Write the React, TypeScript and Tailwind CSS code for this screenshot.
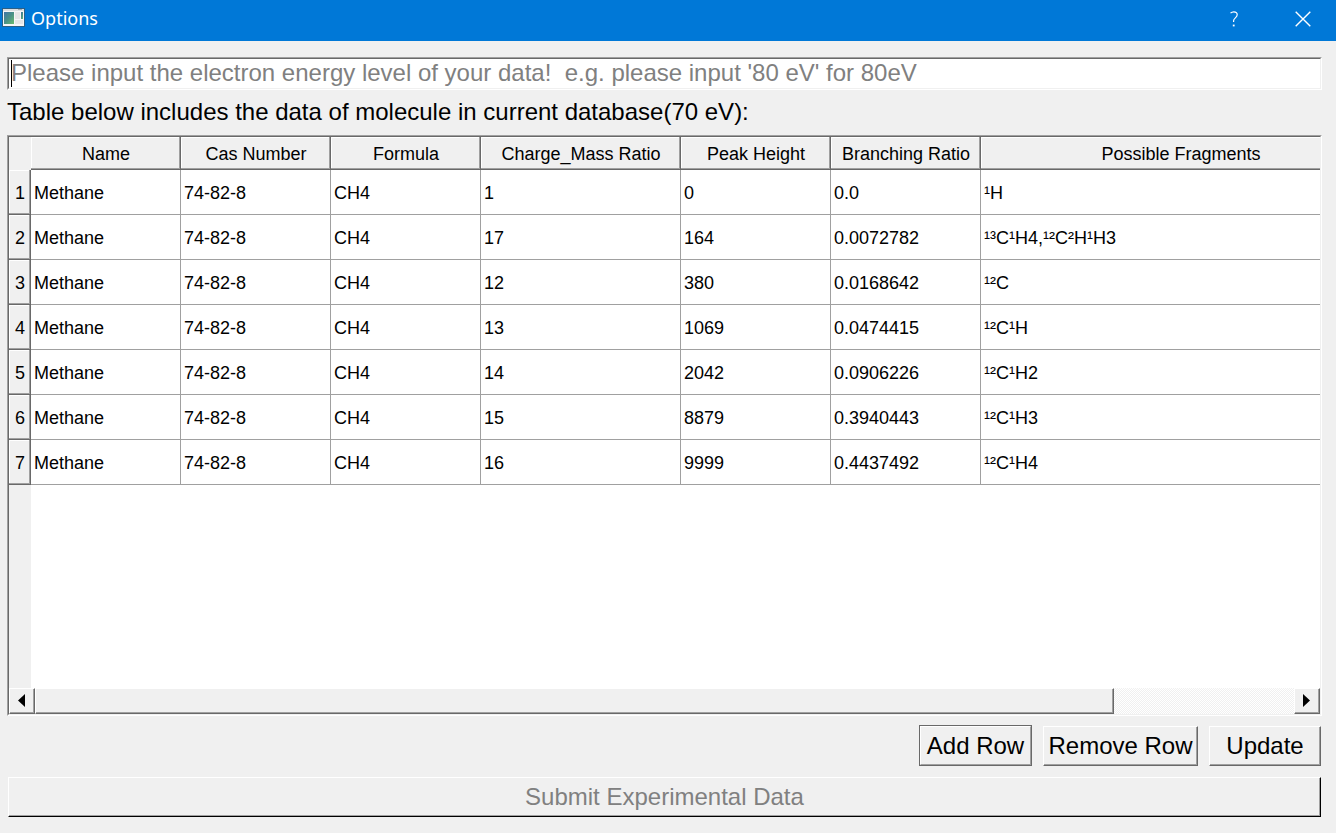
import React from "react";

const columns = [
  "Name",
  "Cas Number",
  "Formula",
  "Charge_Mass Ratio",
  "Peak Height",
  "Branching Ratio",
  "Possible Fragments",
];

const rows = [
  ["Methane", "74-82-8", "CH4", "1", "0", "0.0", "¹H"],
  ["Methane", "74-82-8", "CH4", "17", "164", "0.0072782", "¹³C¹H4,¹²C²H¹H3"],
  ["Methane", "74-82-8", "CH4", "12", "380", "0.0168642", "¹²C"],
  ["Methane", "74-82-8", "CH4", "13", "1069", "0.0474415", "¹²C¹H"],
  ["Methane", "74-82-8", "CH4", "14", "2042", "0.0906226", "¹²C¹H2"],
  ["Methane", "74-82-8", "CH4", "15", "8879", "0.3940443", "¹²C¹H3"],
  ["Methane", "74-82-8", "CH4", "16", "9999", "0.4437492", "¹²C¹H4"],
];

const sectionBevel =
  "border-r border-b border-[#696969] bg-[#f0f0f0] pt-[2px] pr-0 pb-0 pl-px font-normal shadow-[inset_-1px_-1px_0_#a0a0a0,inset_1px_1px_0_#ffffff]";

const raised =
  "border border-t-white border-l-white border-r-[#696969] border-b-[#696969] bg-[#f0f0f0] shadow-[inset_-1px_-1px_0_#a0a0a0]";

function WindowIcon() {
  return (
    <svg width="23" height="19" viewBox="0 0 23 19" aria-hidden="true">
      <defs>
        <linearGradient id="pane" x1="0" y1="0" x2="1" y2="1">
          <stop offset="0" stopColor="#3f74a8" />
          <stop offset="0.5" stopColor="#4b9187" />
          <stop offset="1" stopColor="#6cbd6e" />
        </linearGradient>
      </defs>
      <rect x="0" y="0" width="23" height="19" fill="#2b5f86" />
      <rect x="1" y="1" width="21" height="17" fill="#f6f6f6" />
      <rect x="1" y="1" width="21" height="2" fill="#dcdfe1" />
      <rect x="16" y="1" width="4" height="1" fill="#a3abb0" />
      <rect x="2" y="4" width="10" height="12" fill="url(#pane)" />
      <rect x="13" y="4" width="5" height="7" fill="#e6e6e6" />
      <rect x="19" y="4" width="2" height="7" fill="url(#pane)" />
      <rect x="13" y="12" width="8" height="4" fill="#e6e6e6" />
    </svg>
  );
}

function TitleBar() {
  return (
    <header className="flex h-[41px] items-start justify-between bg-[#0078d7] text-white">
      <div className="flex items-start gap-[6px] pt-2 pl-[2px]">
        <WindowIcon />
        <h1 className="font-['Noto_Sans','Open_Sans',sans-serif] text-[18px] leading-5">Options</h1>
      </div>
      <div className="flex">
        <button type="button" aria-label="Help" className="flex h-[37px] w-[72px] items-center justify-center">
          <svg width="10" height="16" viewBox="0 0 10 16" fill="none" stroke="#fff" strokeWidth="1.2" aria-hidden="true">
            <path d="M1.5 2.2C2.5 1.2 3.6 .8 4.8 .8C6.9 .8 8.2 2 8.2 3.8C8.2 6.7 4.6 7 4.6 9.8V11" />
            <path d="M3.8 14.5H5.6" strokeWidth="1.8" />
          </svg>
        </button>
        <button type="button" aria-label="Close" className="flex h-[37px] w-[66px] items-center justify-center">
          <svg width="16" height="16" viewBox="0 0 16 16" fill="none" stroke="#fff" strokeWidth="1.4" aria-hidden="true">
            <path d="M.7 .7L15.3 15.3M15.3 .7L.7 15.3" />
          </svg>
        </button>
      </div>
    </header>
  );
}

function DataTable() {
  return (
    <table className="w-[1372px] table-fixed border-separate border-spacing-0 text-[18px] leading-5">
      <colgroup>
        <col className="w-[22px]" />
        <col className="w-[150px]" />
        <col className="w-[150px]" />
        <col className="w-[150px]" />
        <col className="w-[200px]" />
        <col className="w-[150px]" />
        <col className="w-[150px]" />
        <col className="w-[400px]" />
      </colgroup>
      <thead>
        <tr className="h-[33px]">
          <td className="bg-[#f0f0f0]" />
          {columns.map((name) => (
            <th key={name} scope="col" className={`${sectionBevel} text-center whitespace-nowrap`}>
              {name}
            </th>
          ))}
        </tr>
      </thead>
      <tbody>
        {rows.map((row, i) => (
          <tr key={row[3]} className="h-[45px]">
            <th scope="row" className={`${sectionBevel} text-center`}>
              {i + 1}
            </th>
            {row.map((value, j) => (
              <td key={columns[j]} className="border-r border-b border-[#a0a0a0] bg-white pt-[2px] pr-0 pb-0 pl-[3px]">
                {value}
              </td>
            ))}
          </tr>
        ))}
      </tbody>
    </table>
  );
}

function ScrollBar() {
  return (
    <div className="flex h-[26px] shrink-0 bg-[conic-gradient(#ffffff_25%,#f0f0f0_0_50%,#ffffff_0_75%,#f0f0f0_0)] bg-size-[2px_2px]">
      <button type="button" aria-label="Scroll left" className={`flex w-[26px] items-center justify-center pr-px pb-px ${raised}`}>
        <svg width="7" height="13" viewBox="0 0 7 13" aria-hidden="true">
          <path d="M7 0V13L0 6.5Z" fill="#000" />
        </svg>
      </button>
      <div className="flex flex-1">
        <div className={`w-[85.7%] ${raised}`} />
      </div>
      <button type="button" aria-label="Scroll right" className={`flex w-[26px] items-center justify-center pr-px pb-px ${raised}`}>
        <svg width="7" height="13" viewBox="0 0 7 13" aria-hidden="true">
          <path d="M0 0V13L7 6.5Z" fill="#000" />
        </svg>
      </button>
    </div>
  );
}

export default function App() {
  return (
    <div className="flex min-h-screen flex-col bg-[#f0f0f0] font-['Liberation_Sans',Arial,sans-serif] text-black">
      <TitleBar />
      <main className="flex flex-1 flex-col pt-4 pr-[14px] pb-4 pl-[7px]">
        <div className="relative border border-t-[#a0a0a0] border-r-white border-b-white border-l-[#a0a0a0]">
          <input
            type="text"
            aria-label="Electron energy level"
            placeholder="Please input the electron energy level of your data!  e.g. please input '80 eV' for 80eV"
            className="block h-[31px] w-full border border-t-[#696969] border-r-[#f0f0f0] border-b-[#f0f0f0] border-l-[#696969] bg-white px-[2px] pb-[2px] text-[24px] leading-7 outline-none placeholder:text-[#808080]"
          />
          <span className="absolute top-[2px] left-[3px] h-[27px] w-px bg-black" />
        </div>
        <p className="flex h-[45px] items-center pb-[2px] text-[24px] leading-7">
          Table below includes the data of molecule in current database(70 eV):
        </p>
        <div className="flex flex-1 flex-col border border-t-[#a0a0a0] border-r-white border-b-white border-l-[#a0a0a0]">
          <div className="flex flex-1 flex-col border border-t-[#696969] border-r-[#f0f0f0] border-b-[#f0f0f0] border-l-[#696969] bg-white">
            <div className="flex flex-1 flex-col overflow-hidden">
              <DataTable />
              <div className="w-[22px] flex-1 bg-[#f0f0f0]" />
            </div>
            <ScrollBar />
          </div>
        </div>
        <div className="flex items-end justify-end gap-[11px] px-px pt-[9px] text-[24px] leading-7">
          <div className="border border-[#696969]">
            <button
              type="button"
              className="block h-[39px] w-[111px] border border-t-white border-r-[#a0a0a0] border-b-[#a0a0a0] border-l-white bg-[#f0f0f0] whitespace-nowrap"
            >
              Add Row
            </button>
          </div>
          <button type="button" className={`h-10 w-[155px] whitespace-nowrap ${raised}`}>
            Remove Row
          </button>
          <button type="button" className={`h-10 w-28 ${raised}`}>
            Update
          </button>
        </div>
        <div className="flex px-px pt-[11px]">
          <button
            type="button"
            disabled
            className="h-10 flex-1 border border-t-white border-r-black border-b-black border-l-white bg-[#f0f0f0] text-[24px] leading-7 text-[#808080] shadow-[inset_-1px_-1px_0_#a0a0a0]"
          >
            Submit Experimental Data
          </button>
        </div>
      </main>
    </div>
  );
}
